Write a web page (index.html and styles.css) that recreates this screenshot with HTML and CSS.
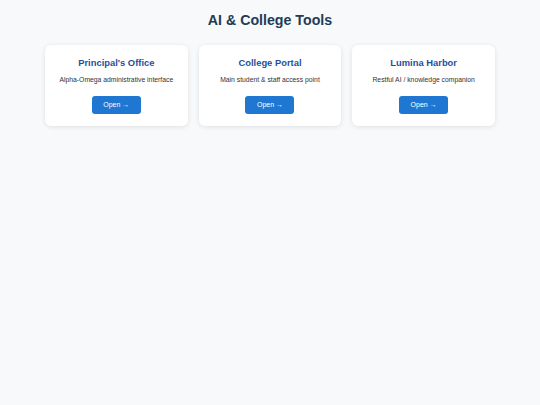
FILE: index.html
```html
<!DOCTYPE html>
<html>
<head>
<meta charset="utf-8">
<link rel="stylesheet" href="styles.css">
</head>
<body>
<h1 class="page-title">AI &amp; College Tools</h1>
<div class="grid">
  <div class="card">
    <h2 class="card-title">Principal's Office</h2>
    <p class="card-desc">Alpha-Omega administrative interface</p>
    <a class="btn" href="#">Open →</a>
  </div>
  <div class="card">
    <h2 class="card-title">College Portal</h2>
    <p class="card-desc">Main student &amp; staff access point</p>
    <a class="btn" href="#">Open →</a>
  </div>
  <div class="card">
    <h2 class="card-title">Lumina Harbor</h2>
    <p class="card-desc">Restful AI / knowledge companion</p>
    <a class="btn" href="#">Open →</a>
  </div>
</div>
</body>
</html>
```
FILE: styles.css
```css
html, body {
  margin: 0;
  background: #f7f9fb;
}
body {
  padding: 10px 45px;
  font-family: "Liberation Sans", Arial, sans-serif;
}
.page-title {
  margin: 0 0 15px;
  text-align: center;
  font-size: 14.2px;
  line-height: 20px;
  font-weight: bold;
  color: #243b55;
}
.grid {
  display: grid;
  grid-template-columns: repeat(3, 1fr);
  gap: 11px;
}
.card {
  background: #ffffff;
  border-radius: 6px;
  box-shadow: 0 1px 5px rgba(0, 0, 0, 0.1);
  padding: 12px 8px 12px;
  text-align: center;
}
.card-title {
  margin: 0 0 5.5px;
  font-size: 9.4px;
  line-height: 12px;
  font-weight: bold;
  color: #1f4f9a;
}
.card-desc {
  margin: 0 0 12.5px;
  font-size: 6.8px;
  line-height: 9px;
  color: #333333;
}
.btn {
  display: inline-block;
  vertical-align: top;
  width: 49px;
  height: 18px;
  line-height: 18px;
  background: #1f77d2;
  color: #ffffff;
  font-size: 7px;
  border-radius: 3px;
  text-decoration: none;
}
```
